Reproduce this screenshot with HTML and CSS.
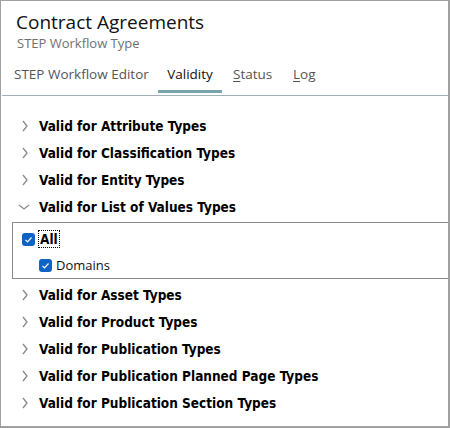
FILE: index.html
```html
<!DOCTYPE html>
<html>
<head>
<meta charset="utf-8">
<link rel="stylesheet" href="styles.css">
</head>
<body>
<div class="frame">
  <div class="header">
    <div class="title">Contract Agreements</div>
    <div class="subtitle">STEP Workflow Type</div>
    <div class="tabs">
      <div class="tab t1">STEP Workflow Editor</div>
      <div class="tab t2 active">Validity</div>
      <div class="tab t3"><u>S</u>tatus</div>
      <div class="tab t4"><u>L</u>og</div>
    </div>
  </div>
  <div class="list">
    <div class="row"><svg class="chev" width="8" height="12" viewBox="0 0 8 12"><polyline points="2,1 6,6 2,11" fill="none" stroke="#8a8a8a" stroke-width="1.3"/></svg><span class="label">Valid for Attribute Types</span></div>
    <div class="row"><svg class="chev" width="8" height="12" viewBox="0 0 8 12"><polyline points="2,1 6,6 2,11" fill="none" stroke="#8a8a8a" stroke-width="1.3"/></svg><span class="label">Valid for Classification Types</span></div>
    <div class="row"><svg class="chev" width="8" height="12" viewBox="0 0 8 12"><polyline points="2,1 6,6 2,11" fill="none" stroke="#8a8a8a" stroke-width="1.3"/></svg><span class="label">Valid for Entity Types</span></div>
    <div class="row open"><svg class="chev down" width="12" height="8" viewBox="0 0 12 8"><polyline points="1,2 6,6 11,2" fill="none" stroke="#8a8a8a" stroke-width="1.3"/></svg><span class="label">Valid for List of Values Types</span></div>
    <div class="box">
      <div class="item">
        <span class="cb"><svg width="13" height="13" viewBox="0 0 13 13"><polyline points="3.5,6.8 5.5,8.8 9.5,4.5" fill="none" stroke="#fff" stroke-width="1.2"/></svg></span>
        <span class="all">All</span>
      </div>
      <div class="item sub">
        <span class="cb"><svg width="13" height="13" viewBox="0 0 13 13"><polyline points="3.5,6.8 5.5,8.8 9.5,4.5" fill="none" stroke="#fff" stroke-width="1.2"/></svg></span>
        <span class="plain">Domains</span>
      </div>
    </div>
    <div class="row"><svg class="chev" width="8" height="12" viewBox="0 0 8 12"><polyline points="2,1 6,6 2,11" fill="none" stroke="#8a8a8a" stroke-width="1.3"/></svg><span class="label">Valid for Asset Types</span></div>
    <div class="row"><svg class="chev" width="8" height="12" viewBox="0 0 8 12"><polyline points="2,1 6,6 2,11" fill="none" stroke="#8a8a8a" stroke-width="1.3"/></svg><span class="label">Valid for Product Types</span></div>
    <div class="row"><svg class="chev" width="8" height="12" viewBox="0 0 8 12"><polyline points="2,1 6,6 2,11" fill="none" stroke="#8a8a8a" stroke-width="1.3"/></svg><span class="label">Valid for Publication Types</span></div>
    <div class="row"><svg class="chev" width="8" height="12" viewBox="0 0 8 12"><polyline points="2,1 6,6 2,11" fill="none" stroke="#8a8a8a" stroke-width="1.3"/></svg><span class="label">Valid for Publication Planned Page Types</span></div>
    <div class="row"><svg class="chev" width="8" height="12" viewBox="0 0 8 12"><polyline points="2,1 6,6 2,11" fill="none" stroke="#8a8a8a" stroke-width="1.3"/></svg><span class="label">Valid for Publication Section Types</span></div>
  </div>
</div>
</body>
</html>
```
FILE: styles.css
```css
html, body {
  margin: 0;
  padding: 0;
  background: #fff;
}
.frame {
  box-sizing: border-box;
  width: 450px;
  height: 428px;
  border: 1px solid #a0a0a0;
  border-right-width: 2px;
  border-bottom-width: 2px;
  font-family: "Open Sans", "Noto Sans", sans-serif;
  color: #000;
  overflow: hidden;
}
.header {
  height: 94px;
  border-bottom: 1px solid #9fb0b8;
  margin-left: 1px;
  display: flex;
  flex-direction: column;
}
.title {
  font-size: 19px;
  line-height: 24px;
  padding: 9px 0 0 14px;
  color: #111;
}
.subtitle {
  font-size: 13px;
  line-height: 18px;
  padding-left: 15px;
  color: #707070;
}
.tabs {
  display: flex;
  margin-top: 10px;
  height: 33px;
}
.tab {
  font-size: 13.5px;
  line-height: 24px;
  color: #555;
  box-sizing: border-box;
}
.tab u { text-decoration: underline; text-underline-offset: 2px; }
.t1 { padding-left: 12px; width: 156px; }
.t2 { width: 64px; text-align: center; color: #111; border-bottom: 3px solid #7aa4ae; height: 31px; }
.t3 { padding-left: 11px; width: 71px; }
.list {
  padding-top: 16px;
}
.row {
  height: 27px;
  display: flex;
  align-items: center;
}
.chev {
  margin-left: 20px;
  width: 8px;
  margin-right: 10px;
}
.chev.down {
  margin-left: 17px;
  width: 12px;
  margin-right: 9px;
}
.label {
  font-family: "DejaVu Sans Condensed", "DejaVu Sans", sans-serif;
  font-weight: bold;
  font-size: 13.5px;
  color: #000;
}
.box {
  margin: 2px 0 2px 11px;
  height: 55px;
  border: 1px solid #8a8a8a;
  border-right: none;
  display: flex;
  flex-direction: column;
}
.item {
  height: 26px;
  display: flex;
  align-items: center;
  padding-left: 9px;
}
.item:first-child { margin-top: 3px; }
.item.sub { padding-left: 26px; }
.cb {
  width: 13px;
  height: 13px;
  border-radius: 3px;
  background: #0f63c4;
  display: inline-flex;
  margin-right: 4px;
}
.cb svg { display: block; }
.all {
  font-family: "DejaVu Sans Condensed", "DejaVu Sans", sans-serif;
  font-weight: bold;
  font-size: 13.5px;
  outline: 1px dotted #000;
  padding: 0 1px;
  line-height: 16px;
}
.plain {
  font-family: "Open Sans", "Noto Sans", sans-serif;
  font-size: 13px;
  color: #111;
}
```
